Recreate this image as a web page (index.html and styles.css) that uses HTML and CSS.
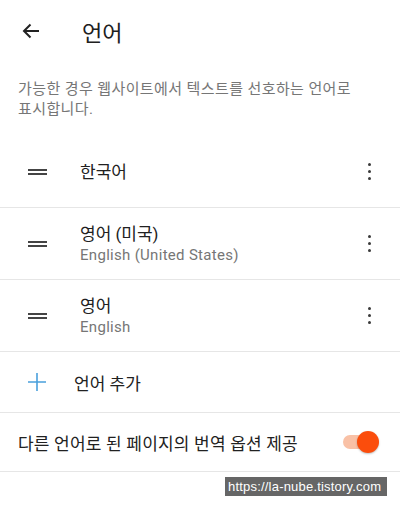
FILE: index.html
```html
<!DOCTYPE html>
<html lang="ko">
<head>
	<meta charset="utf-8">
	<title>언어</title>
	<link rel="stylesheet" href="styles.css">
</head>
<body>
	<div class="header">
		<svg class="back" width="18" height="16" viewBox="0 0 18 16">
			<path d="M17 8H2M8.5 1.5L2 8l6.5 6.5" fill="none" stroke="#222" stroke-width="2"/>
		</svg>
		<h1 class="title">언어</h1>
	</div>

	<p class="desc">가능한 경우 웹사이트에서 텍스트를 선호하는 언어로 표시합니다.</p>

	<div class="lang-list">
		<div class="lang-row">
			<span class="handle"></span>
			<div class="lang-text">
				<div class="lang-name">한국어</div>
			</div>
			<span class="more"><i></i><i></i><i></i></span>
		</div>
		<div class="lang-row">
			<span class="handle"></span>
			<div class="lang-text">
				<div class="lang-name">영어 (미국)</div>
				<div class="lang-sub">English (United States)</div>
			</div>
			<span class="more"><i></i><i></i><i></i></span>
		</div>
		<div class="lang-row">
			<span class="handle"></span>
			<div class="lang-text">
				<div class="lang-name">영어</div>
				<div class="lang-sub">English</div>
			</div>
			<span class="more"><i></i><i></i><i></i></span>
		</div>
	</div>

	<div class="add-row">
		<svg class="plus" width="20" height="20" viewBox="0 0 20 20">
			<path d="M10 1v18M1 10h18" stroke="#4aa0dc" stroke-width="1.6"/>
		</svg>
		<span class="add-label">언어 추가</span>
	</div>

	<div class="toggle-row">
		<span class="toggle-label">다른 언어로 된 페이지의 번역 옵션 제공</span>
		<span class="toggle"><span class="track"></span><span class="thumb"></span></span>
	</div>

	<div class="watermark-wrap">
		<span class="watermark">https://la-nube.tistory.com</span>
	</div>
</body>
</html>
```

FILE: styles.css
```css
body{
	margin: 0;
	background: #fff;
	font-family: Roboto, "Noto Sans CJK KR", sans-serif;
	color: #212121;
}
.header{
	display: flex;
	align-items: center;
	height: 62px;
	padding-left: 22px;
}
.back{
	display: block;
}
.title{
	margin: 0 0 0 42px;
	font-size: 22px;
	font-weight: 400;
	color: #202020;
}
.desc{
	margin: 17px 0 17px;
	padding: 0 18px;
	font-size: 15px;
	letter-spacing: 0.4px;
	line-height: 20px;
	color: #767676;
	word-break: keep-all;
}
.lang-row{
	display: flex;
	align-items: center;
	height: 71px;
	border-bottom: 1px solid #e6e6e6;
}
.handle{
	width: 19px;
	height: 6px;
	margin-left: 28px;
	margin-right: 33px;
	border-top: 2px solid #444;
	border-bottom: 2px solid #444;
	box-sizing: border-box;
}
.lang-text{
	flex: 1;
}
.lang-name{
	font-size: 17px;
	line-height: 22px;
}
.lang-sub{
	font-size: 15px;
	letter-spacing: 0.3px;
	line-height: 20px;
	color: #767676;
}
.more{
	display: flex;
	flex-direction: column;
	gap: 4px;
	margin-right: 29px;
}
.more i{
	width: 3px;
	height: 3px;
	border-radius: 50%;
	background: #3a3a3a;
}
.add-row{
	display: flex;
	align-items: center;
	height: 60px;
	border-bottom: 1px solid #e6e6e6;
}
.plus{
	display: block;
	margin-left: 27px;
	margin-right: 27px;
}
.add-label{
	font-size: 17px;
}
.toggle-row{
	display: flex;
	align-items: center;
	justify-content: space-between;
	height: 58px;
	padding: 0 21px 0 18px;
	border-bottom: 1px solid #e6e6e6;
}
.toggle-label{
	font-size: 17px;
	letter-spacing: 0.2px;
}
.toggle{
	position: relative;
	width: 36px;
	height: 22px;
}
.toggle .track{
	position: absolute;
	left: 0;
	top: 4px;
	width: 30px;
	height: 14px;
	border-radius: 7px;
	background: #f9c1a6;
}
.toggle .thumb{
	position: absolute;
	right: 0;
	top: 0;
	width: 22px;
	height: 22px;
	border-radius: 50%;
	background: #fb4d0c;
	box-shadow: 0 1px 2px rgba(0,0,0,0.25);
}
.watermark-wrap{
	display: flex;
	justify-content: flex-end;
	padding: 5px 13px 0 0;
}
.watermark{
	display: inline-block;
	width: 162px;
	height: 19px;
	padding-left: 3px;
	box-sizing: border-box;
	background: #666;
	color: #fff;
	font-family: "Liberation Sans", sans-serif;
	font-size: 13px;
	line-height: 19px;
	letter-spacing: 0.2px;
}
```
